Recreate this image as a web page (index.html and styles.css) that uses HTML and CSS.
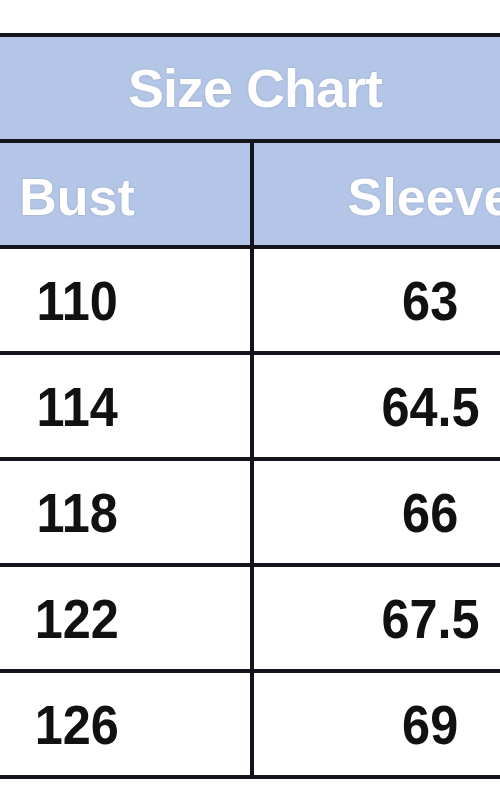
FILE: index.html
```html
<!DOCTYPE html>
<html>
<head>
<meta charset="utf-8">
<link rel="stylesheet" href="styles.css">
</head>
<body>
<div class="chart">
  <div class="title">Size Chart</div>
  <div class="row head"><div class="cell"><span class="txt">Bust</span></div><div class="cell"><span class="txt">Sleeve</span></div></div>
  <div class="row"><div class="cell"><span class="num">110</span></div><div class="cell"><span class="num">63</span></div></div>
  <div class="row"><div class="cell"><span class="num">114</span></div><div class="cell"><span class="num">64.5</span></div></div>
  <div class="row"><div class="cell"><span class="num">118</span></div><div class="cell"><span class="num">66</span></div></div>
  <div class="row"><div class="cell"><span class="num">122</span></div><div class="cell"><span class="num">67.5</span></div></div>
  <div class="row"><div class="cell"><span class="num">126</span></div><div class="cell"><span class="num">69</span></div></div>
</div>
</body>
</html>
```
FILE: styles.css
```css
html, body {
  margin: 0;
  padding: 0;
  background: #ffffff;
  overflow: hidden;
}
body {
  width: 500px;
  height: 800px;
  font-family: "Liberation Sans", Arial, sans-serif;
  font-weight: bold;
}
.chart {
  margin: 33px 0 0 -96px;
  width: 702px;
  border-top: 4px solid #14141c;
}
.title {
  height: 102px;
  border-bottom: 4px solid #14141c;
  background: #b4c6e7;
  color: #ffffff;
  font-size: 54px;
  letter-spacing: -1px;
  display: flex;
  align-items: center;
  justify-content: center;
  text-shadow: 0 0 2px rgba(110, 125, 150, 0.55);
}
.row {
  display: grid;
  grid-template-columns: 350px 352px;
}
.cell {
  box-sizing: border-box;
  height: 106px;
  border-bottom: 4px solid #14141c;
  display: flex;
  align-items: center;
  justify-content: center;
  color: #111111;
}
.cell:first-child {
  border-right: 4px solid #14141c;
}
.num {
  display: inline-block;
  font-size: 56px;
  transform: scaleX(0.9);
}
.head .cell {
  background: #b4c6e7;
  color: #ffffff;
  padding-top: 6px;
  text-shadow: 0 0 2px rgba(110, 125, 150, 0.55);
}
.txt {
  font-size: 52px;
}
```
